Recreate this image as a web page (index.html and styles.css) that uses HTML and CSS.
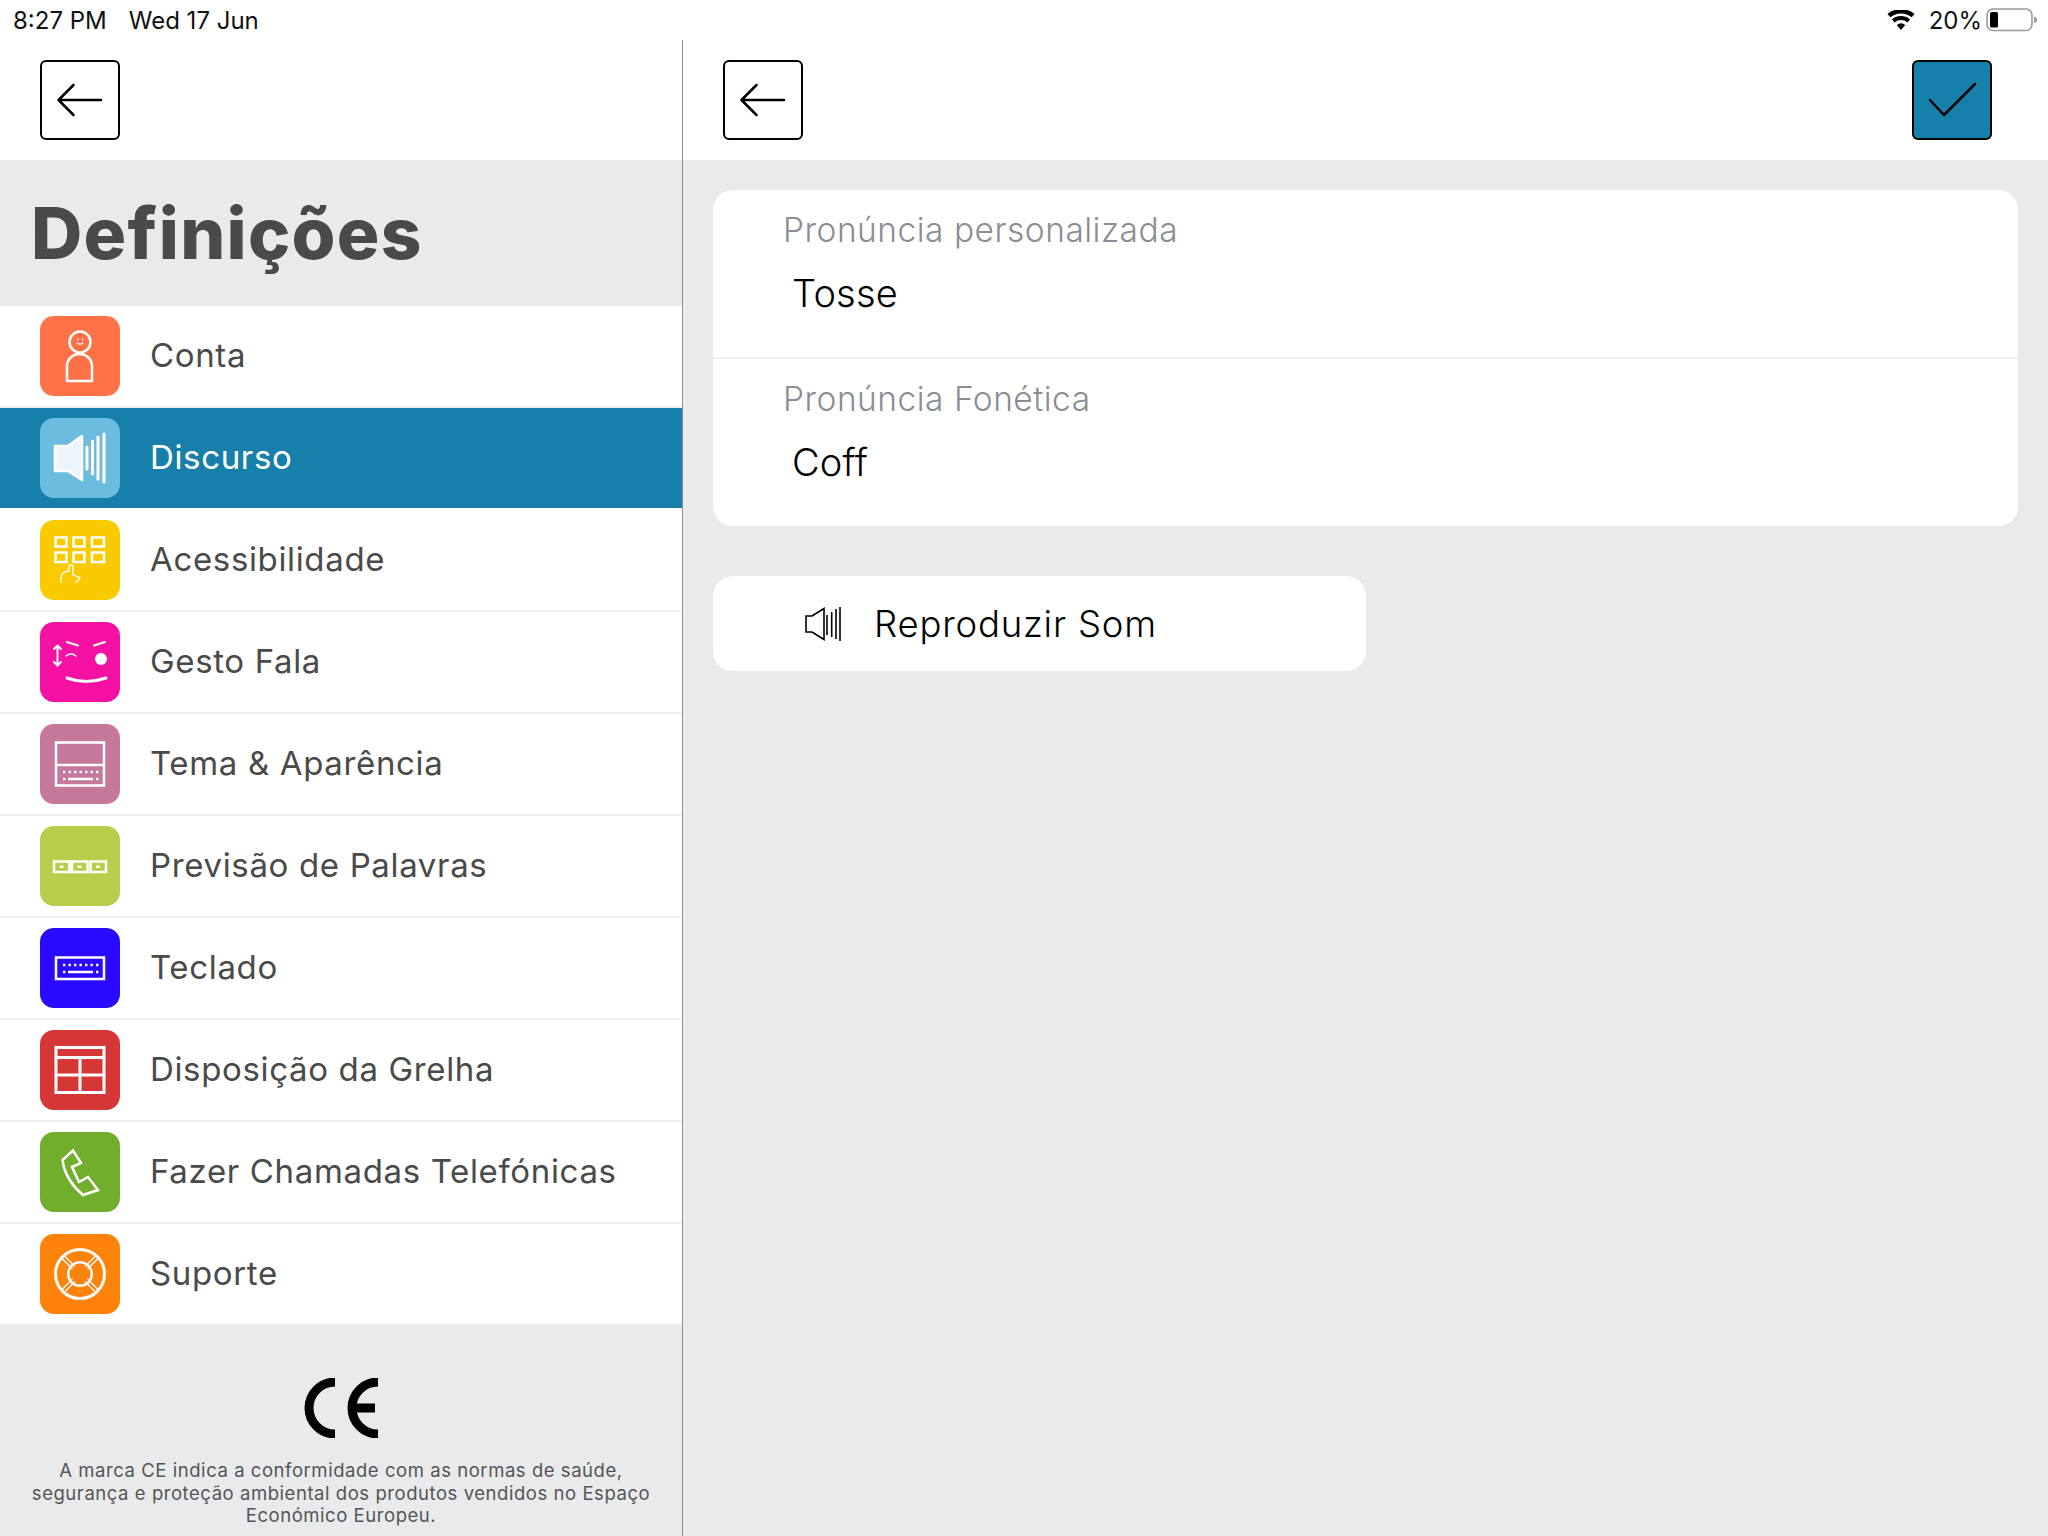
FILE: index.html
```html
<!DOCTYPE html>
<html lang="pt">
<head>
<meta charset="utf-8">
<title>Definições</title>
<link rel="stylesheet" href="styles.css">
</head>
<body>
<div class="app">
  <header class="status">
    <div class="status-left"><span>8:27 PM</span><span>Wed 17 Jun</span></div>
    <div class="status-right">
      <svg class="wifi" viewBox="0 0 28 20"><path d="M14 20l-4.2-5a6.5 6.5 0 0 1 8.4 0zM7.6 12.4L5 9.4a14 14 0 0 1 18 0l-2.600 3a10 10 0 0 0-12.800 0zM3.300 7.300L.5 4a21 21 0 0 1 27 0l-2.800 3.300a17 17 0 0 0-21.400 0z"/></svg>
      <span class="pct">20%</span>
      <svg class="battery" viewBox="0 0 52 24"><rect x="1" y="1" width="45" height="21.500" rx="6" fill="none" stroke="#9a9a9a" stroke-width="1.600"/><rect x="4" y="4" width="8" height="15.500" rx="1.500"/><path d="M48 8.500c2 .5 3 2 3 3.300s-1 2.800-3 3.300z" fill="#9a9a9a"/></svg>
    </div>
  </header>
  <div class="panes">
    <aside class="side">
      <div class="toolbar">
        <button class="tool"><svg viewBox="0 0 76 76"><path class="ln" d="M16.500 38H59M31.500 23L16.500 38L31.500 53"/></svg></button>
      </div>
      <h1 class="title">Definições</h1>
      <ul class="menu">
        <li class="row">
          <span class="ico ico-conta"><svg viewBox="0 0 80 80"><circle class="w" cx="40" cy="26" r="10.500"/><path class="w" d="M27 65V50a12.500 12 0 0 1 25 0V65Z"/><path class="t" d="M37 27q3 2 6 0M38 23v.8M42.500 23v.8"/></svg></span>
          <span class="lbl">Conta</span>
        </li>
        <li class="row row-on">
          <span class="ico ico-disc"><svg viewBox="0 0 80 80"><path class="spk" d="M15 28H28L42 18V62L28 53H15Z"/><path class="b3" d="M47 29V51M52.500 23V56M58 19V61M64 16V64"/></svg></span>
          <span class="lbl">Discurso</span>
        </li>
        <li class="row">
          <span class="ico ico-aces"><svg viewBox="0 0 80 80"><path class="w" d="M15.500 17.500h11v9h-11zM33.500 17.500h11v9h-11zM52 17.500h12v9h-12zM15.500 32.500h11v9.500h-11zM33.500 32.500h11v9.500h-11zM52 32.500h12v9.500h-12z"/><path class="t" d="M21 62q-.5-7 2-9q2-1.500 6-2V46q2-2 4 0V55l7 2.500l-4 5"/></svg></span>
          <span class="lbl">Acessibilidade</span>
        </li>
        <li class="row">
          <span class="ico ico-gest"><svg viewBox="0 0 80 80"><path class="b2" d="M17.500 24V43M14 27l3.500-3.500L21 27M14 40l3.500 3.500L21 40"/><path class="b2" d="M27 20l11 3.500M54 23.500L65 20"/><path class="t" d="M26 34q5-4 10 0"/><circle class="dot" cx="61" cy="37" r="6"/><path class="b3" d="M27 56q19 7 39 0"/></svg></span>
          <span class="lbl">Gesto Fala</span>
        </li>
        <li class="row">
          <span class="ico ico-tema"><svg viewBox="0 0 80 80"><path class="w" d="M16 18.500H64V61.500H16ZM16 41H64"/><path class="dots" d="M23 48h2.400M28.500 48h2.400M34 48h2.400M39.500 48h2.400M45 48h2.400M50.500 48h2.400M56 48h2.400M23 55h2.400M56 55h2.400"/><path class="w" d="M28 55H53"/></svg></span>
          <span class="lbl">Tema &amp; Aparência</span>
        </li>
        <li class="row">
          <span class="ico ico-prev"><svg viewBox="0 0 80 80"><path class="w" d="M14 35.500H29.500V46H14ZM32 35.500H47.500V46H32ZM50.500 35.500H66V46H50.500Z"/><path class="dots" d="M19.500 40.700h4M37.500 40.700h4M56 40.700h4"/></svg></span>
          <span class="lbl">Previsão de Palavras</span>
        </li>
        <li class="row">
          <span class="ico ico-tecl"><svg viewBox="0 0 80 80"><path class="w" d="M16 29.500H64V51H16Z"/><path class="dots" d="M23 37h2.400M28.500 37h2.400M34 37h2.400M39.500 37h2.400M45 37h2.400M50.500 37h2.400M56 37h2.400M23 44h2.400M56 44h2.400"/><path class="w" d="M28 44H53"/></svg></span>
          <span class="lbl">Teclado</span>
        </li>
        <li class="row">
          <span class="ico ico-disp"><svg viewBox="0 0 80 80"><path class="b3" d="M16 17.500H64V62.500H16ZM16 27.500H64M16 45H64M40 27.500V62.500"/></svg></span>
          <span class="lbl">Disposição da Grelha</span>
        </li>
        <li class="row">
          <span class="ico ico-tel"><svg viewBox="0 0 80 80"><path class="w" d="M33 18.500L22.500 28C24 42 33 55 43 63L58 58L48 45L39 50L32 35L41 31Z"/></svg></span>
          <span class="lbl">Fazer Chamadas Telefónicas</span>
        </li>
        <li class="row">
          <span class="ico ico-sup"><svg viewBox="0 0 80 80"><circle class="b3" cx="40" cy="40" r="24.500"/><circle class="w" cx="40" cy="40" r="11.800"/><path class="t" d="M22.500 25l9.500 9.500M25 22.500l9.500 9.500M57.500 25L48 34.500M55 22.500L45.500 32M22.500 55L32 45.500M25 57.500L34.500 48M57.500 55L48 45.500M55 57.500L45.500 48"/></svg></span>
          <span class="lbl">Suporte</span>
        </li>
      </ul>
      <footer class="ce">
        <svg class="ce-mark" viewBox="0 0 78 60"><path d="M33 4A26 26 0 0 0 33 56M76 4A26 26 0 0 0 76 56M48 30H73"/></svg>
        <p class="ce-text">A marca CE indica a conformidade com as normas de saúde, segurança e proteção ambiental dos produtos vendidos no Espaço Económico Europeu.</p>
      </footer>
    </aside>
    <main class="main">
      <div class="toolbar toolbar-main">
        <button class="tool"><svg viewBox="0 0 76 76"><path class="ln" d="M16.500 38H59M31.500 23L16.500 38L31.500 53"/></svg></button>
        <button class="tool tool-ok"><svg viewBox="0 0 76 76"><path class="ln" d="M16 38L30 53L61 22"/></svg></button>
      </div>
      <div class="content">
        <section class="card">
          <div class="field">
            <div class="f-label">Pronúncia personalizada</div>
            <div class="f-value">Tosse</div>
          </div>
          <div class="field">
            <div class="f-label">Pronúncia Fonética</div>
            <div class="f-value">Coff</div>
          </div>
        </section>
        <button class="play">
          <svg class="play-ico" viewBox="0 0 36 34"><path d="M1 9H7L19 1.500V32.500L7 25H1ZM22 8V28M26.700 5V30M31 2V32M35 0V34"/></svg>
          <span>Reproduzir Som</span>
        </button>
      </div>
    </main>
  </div>
</div>
</body>
</html>
```

FILE: styles.css
```css
* { box-sizing: border-box; }
html, body { margin: 0; padding: 0; }
body { background: #fff; font-family: "Inter", "Liberation Sans", sans-serif; color: #000; }
.app { width: 2048px; height: 1536px; display: flex; flex-direction: column; overflow: hidden; }

.status { height: 40px; flex: none; display: flex; justify-content: space-between; align-items: center; padding: 0 10px 0 13px; font-size: 24px; color: #111; }
.status-left { display: flex; gap: 22px; }
.status-right { display: flex; align-items: center; }
.wifi { width: 28px; height: 20px; margin-right: 14px; }
.pct { margin-right: 4px; }
.battery { width: 52px; height: 24px; }

.panes { flex: 1; display: flex; min-height: 0; }
.side { width: 683px; flex: none; background: #e9eaec; border-right: 1px solid #8f8f8f; display: flex; flex-direction: column; }
.main { flex: 1; background: #e9eaec; display: flex; flex-direction: column; }

.toolbar { height: 120px; flex: none; background: #fff; display: flex; align-items: center; padding: 0 40px; }
.toolbar-main { justify-content: space-between; padding: 0 56px 0 40px; }
.tool { width: 80px; height: 80px; padding: 0; border: 2px solid #000; border-radius: 6px; background: #fff; display: block; }
.tool svg { display: block; width: 76px; height: 76px; }
.tool-ok { background: #1680ab; }
.ln { fill: none; stroke: #000; stroke-width: 2.500; stroke-linecap: round; stroke-linejoin: round; }

.title { height: 146px; margin: 0; padding: 0 0 0 31px; display: flex; align-items: center; font-size: 71px; font-weight: 800; color: #4a4a4a; letter-spacing: 1.300px; }

.menu { list-style: none; margin: 0; padding: 0; background: #fff; }
.row { height: 102px; display: flex; align-items: center; gap: 30px; padding: 0 40px; border-bottom: 2px solid #eeeeee; font-size: 33px; color: #4a4a4a; }
.row:last-child { height: 100px; border-bottom: 0; }
.row-on { background: #1680ab; color: #fff; border-bottom-color: #fff; }
.lbl { letter-spacing: 0.650px; padding-bottom: 2px; }
.ico { width: 80px; height: 80px; flex: none; border-radius: 14px; display: block; }
.ico svg { display: block; width: 80px; height: 80px; }
.ico-conta { background: #ff7247; }
.ico-disc { background: #6cbcdf; }
.ico-aces { background: #f9ca00; }
.ico-gest { background: #f511a1; }
.ico-tema { background: #c57899; }
.ico-prev { background: #b9cd4a; }
.ico-tecl { background: #2a0bff; }
.ico-disp { background: #d53636; }
.ico-tel { background: #72ae2d; }
.ico-sup { background: #ff830a; }

.w { fill: none; stroke: #fff; stroke-width: 2.500; }
.t { fill: none; stroke: #fff; stroke-width: 1.300; stroke-linecap: round; stroke-linejoin: round; }
.b2 { fill: none; stroke: #fff; stroke-width: 2; stroke-linecap: round; stroke-linejoin: round; }
.b3 { fill: none; stroke: #fff; stroke-width: 3; stroke-linecap: round; }
.spk { fill: #eaf6fc; stroke: #fff; stroke-width: 2.500; stroke-linejoin: round; }
.dots { fill: none; stroke: #fff; stroke-width: 2.400; }
.dot { fill: #fff; }

.ce { flex: 1; display: flex; flex-direction: column; align-items: center; padding: 54px 20px 0; }
.ce-mark { width: 78px; height: 60px; display: block; fill: none; stroke: #000; stroke-width: 9; }
.ce-text { margin: 21px 0 0; font-size: 18.500px; line-height: 22.500px; text-align: center; color: #555; width: 640px; letter-spacing: 0.550px; }

.content { flex: 1; padding: 30px 30px 0 30px; display: flex; flex-direction: column; align-items: flex-start; gap: 50px; }
.card { width: 100%; background: #fff; border-radius: 20px; height: 336px; }
.field { height: 167px; padding: 20px 0 0 70px; }
.field + .field { border-top: 2px solid #eeeeee; height: 169px; }
.f-label { font-size: 33.500px; font-weight: 300; color: #8a8d91; line-height: 40px; letter-spacing: 0.500px; }
.f-value { font-size: 38px; font-weight: 300; color: #000; margin: 20px 0 0 9px; line-height: 46px; letter-spacing: 0.200px; }
.play { width: 653px; height: 95px; background: #fff; border: 0; border-radius: 20px; display: flex; align-items: center; gap: 33px; padding: 0 0 0 92px; font: 300 36.500px "Inter", "Liberation Sans", sans-serif; letter-spacing: 0.800px; color: #000; }
.play-ico { width: 36px; height: 34px; flex: none; fill: none; stroke: #000; stroke-width: 1.600; }
```
